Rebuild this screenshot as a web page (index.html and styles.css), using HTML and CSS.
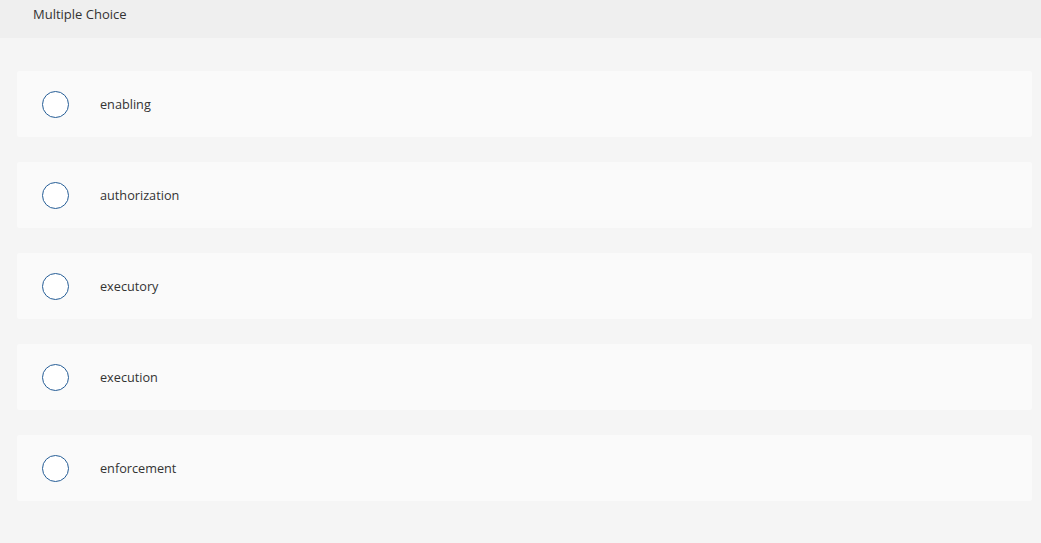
FILE: index.html
```html
<!DOCTYPE html>
<html lang="en">
<head>
    <meta charset="UTF-8">
    <title>Multiple Choice</title>
    <link rel="stylesheet" href="styles.css">
</head>
<body>
    <div class="header">Multiple Choice</div>

    <div class="choices">
        <label class="choice">
            <span class="radio"></span>
            <span class="choice-text">enabling</span>
        </label>
        <label class="choice">
            <span class="radio"></span>
            <span class="choice-text">authorization</span>
        </label>
        <label class="choice">
            <span class="radio"></span>
            <span class="choice-text">executory</span>
        </label>
        <label class="choice">
            <span class="radio"></span>
            <span class="choice-text">execution</span>
        </label>
        <label class="choice">
            <span class="radio"></span>
            <span class="choice-text">enforcement</span>
        </label>
    </div>
</body>
</html>
```

FILE: styles.css
```css
body {
    margin: 0;
    background: #f5f5f5;
    font-family: 'Open Sans', 'Lato', sans-serif;
    color: #333;
    height: 543px;
    overflow: hidden;
}
.header {
    background: #efefef;
    height: 38px;
    padding: 6px 0 0 33px;
    box-sizing: border-box;
    font-size: 13px;
    line-height: 16px;
    color: #333;
}
.choices {
    padding: 33px 9px 0 17px;
    display: flex;
    flex-direction: column;
    gap: 25px;
}
.choice {
    display: flex;
    align-items: center;
    height: 66px;
    background: #fafafa;
    border-radius: 2px;
    padding-left: 25px;
    cursor: pointer;
}
.radio {
    width: 25px;
    height: 25px;
    border: 1.5px solid #255d96;
    border-radius: 50%;
    background: #fff;
    flex-shrink: 0;
}
.choice-text {
    margin-left: 31px;
    font-size: 12.7px;
}
```
